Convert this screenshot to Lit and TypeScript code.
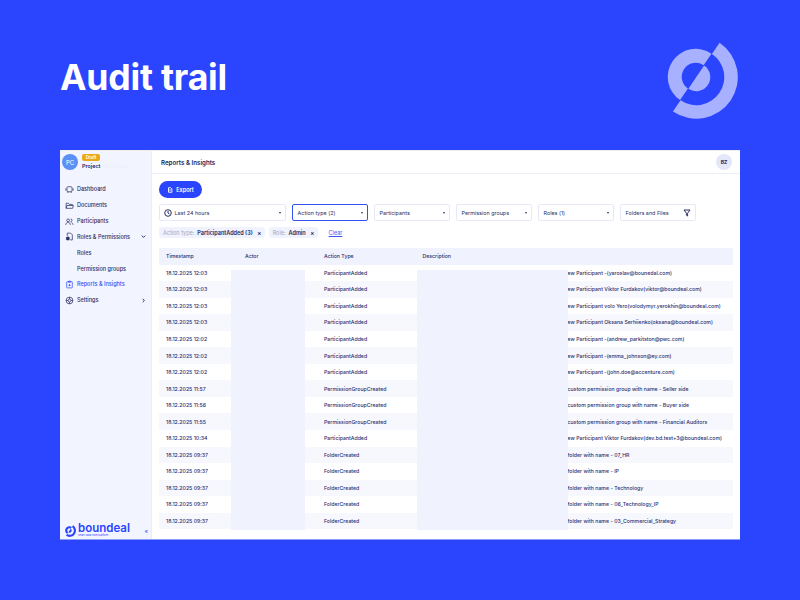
import { LitElement, html, css, svg } from "lit";
import { customElement } from "lit/decorators.js";

const rows = [
  ["18.12.2025 12:03", "ParticipantAdded", "ew Participant -(yaroslav@bounedal.com)"],
  ["18.12.2025 12:03", "ParticipantAdded", "ew Participant Viktor Furdakov(viktor@boundeal.com)"],
  ["18.12.2025 12:03", "ParticipantAdded", "ew Participant volo Yero(volodymyr.yerokhin@boundeal.com)"],
  ["18.12.2025 12:03", "ParticipantAdded", "ew Participant Oksana Serhiienko(oksana@boundeal.com)"],
  ["18.12.2025 12:02", "ParticipantAdded", "ew Participant -(andrew_parkitston@pwc.com)"],
  ["18.12.2025 12:02", "ParticipantAdded", "ew Participant -(emma_johnson@ey.com)"],
  ["18.12.2025 12:02", "ParticipantAdded", "ew Participant -(john.doe@accenture.com)"],
  ["18.12.2025 11:57", "PermissionGroupCreated", "custom permission group with name - Seller side"],
  ["18.12.2025 11:56", "PermissionGroupCreated", "custom permission group with name - Buyer side"],
  ["18.12.2025 11:55", "PermissionGroupCreated", "custom permission group with name - Financial Auditors"],
  ["18.12.2025 10:34", "ParticipantAdded", "ew Participant Viktor Furdakov(dev.bd.test+3@boundeal.com)"],
  ["18.12.2025 09:37", "FolderCreated", "folder with name - 07_HR"],
  ["18.12.2025 09:37", "FolderCreated", "folder with name - IP"],
  ["18.12.2025 09:37", "FolderCreated", "folder with name - Technology"],
  ["18.12.2025 09:37", "FolderCreated", "folder with name - 06_Technology_IP"],
  ["18.12.2025 09:37", "FolderCreated", "folder with name - 03_Commercial_Strategy"],
];

// the mark: ring on one side of the slash, half disc and outer band on the other
const mark = svg`
  <path transform="translate(-.25 -.17)" d="M15.7 -23.2A28 28 0 0 0 -15.7 23.2L-7.85 11.6A14 14 0 0 1 7.85 -11.6Z"></path>
  <path transform="translate(.25 .17)" d="M23.3 -34.4A41.5 41.5 0 0 1 -23.3 34.4L-15.7 23.2A28 28 0 0 0 15.7 -23.2Z"></path>
  <path transform="translate(.25 .17)" d="M7.85 -11.6A14 14 0 0 1 -7.85 11.6Z"></path>
`;

const icons: Record<string, unknown> = {
  dashboard: svg`<rect x="3.5" y="3" width="9" height="9" rx="2"/><path d="M1.5 6v4M14.5 6v4M5 12v2M11 12v2"/>`,
  documents: svg`<path d="M2 13V4h4l1.5 2H13v2"/><path d="M2 13l1.5-5H15l-1.500 5z"/>`,
  participants: svg`<circle cx="5.5" cy="6" r="2.5"/><path d="M1.500 14c0-3 2-4.500 4-4.500s4 1.500 4 4.500M10 3.500a2.500 2.500 0 0 1 0 5M11.500 10c1.500.6 3 2 3 4"/>`,
  roles: svg`<path d="M4 7V2h6l3 3v9H9"/><rect x="2.5" y="9" width="5" height="5" rx="1" fill="currentColor"/>`,
  reports: svg`<rect x="3" y="3" width="10" height="11" rx="1"/><path d="M6 2h4v2H6zM8 7v4M6 9.500h4"/>`,
  settings: svg`<circle cx="8" cy="8" r="6"/><circle cx="8" cy="8" r="2.500"/><path d="M8 2v3.500M8 10.500V14M2 8h3.500M10.500 8H14"/>`,
};

const navIcon = (name: string) =>
  html`<svg class="nav-icon" viewBox="0 0 16 16">${icons[name]}</svg>`;

@customElement("app-root")
export class AppRoot extends LitElement {
  static styles = css`
    :host {
      display: block;
      width: 800px;
      height: 600px;
      overflow: hidden;
      background: #2b45ff;
      font-family: Inter, "Liberation Sans", sans-serif;
      color: #1b1f5e;
    }
    .hero {
      height: 150px;
      padding: 0 60px;
      box-sizing: border-box;
      display: flex;
      justify-content: space-between;
      align-items: flex-start;
    }
    h1 {
      margin: 55px 0 0;
      font-size: 35.6px;
      line-height: 46px;
      font-weight: 700;
      color: #fff;
      letter-spacing: -0.2px;
    }
    .mark {
      width: 84px;
      height: 84px;
      margin: 35px 2px 0 0;
      fill: #a8b1ff;
    }
    .window {
      margin: 0 60px;
      height: 390px;
      box-sizing: border-box;
      background: #fff;
      border-top: 1px solid #efeee8;
      border-bottom: 1px solid #8f9cff;
      display: flex;
      overflow: hidden;
    }
    .side {
      width: 92px;
      flex: none;
      background: #f2f4ff;
      border-right: 1px solid #eaecf6;
      box-sizing: border-box;
      display: flex;
      flex-direction: column;
      padding: 2px 0 2px 2px;
    }
    .project {
      display: flex;
      gap: 4px;
      align-items: center;
      height: 18px;
    }
    .pc {
      width: 16px;
      height: 16px;
      border-radius: 50%;
      background: #5c90f5;
      color: #fff;
      font-size: 6px;
      display: grid;
      place-items: center;
    }
    .draft {
      display: block;
      width: 18px;
      height: 7px;
      border-radius: 2px;
      background: #e9a91d;
      color: #fff;
      font-size: 4.5px;
      line-height: 7px;
      text-align: center;
      font-weight: 600;
    }
    .pname {
      font-size: 5.4px;
      font-weight: 600;
      line-height: 8px;
      margin-top: 1px;
    }
    .pname span {
      color: #eef0fb;
    }
    nav {
      margin-top: 10.4px;
      display: flex;
      flex-direction: column;
    }
    .nav {
      height: 15.85px;
      display: flex;
      align-items: center;
      gap: 3px;
      padding-left: 3px;
      font-size: 5.5px;
      font-weight: 500;
      color: #2a2f66;
    }
    .nav.sub {
      padding-left: 15px;
    }
    .nav.active {
      color: #3450f5;
    }
    .nav-icon {
      width: 9px;
      height: 9px;
      flex: none;
      fill: none;
      stroke: currentColor;
      stroke-width: 1.3;
    }
    .chev {
      margin-left: auto;
      margin-right: 5px;
      width: 5px;
      height: 5px;
      fill: none;
      stroke: currentColor;
      stroke-width: 1.2;
    }
    .brand {
      margin-top: auto;
      display: flex;
      align-items: center;
      gap: 2.5px;
      padding-left: 0.5px;
      color: #2b45ff;
    }
    .brand svg {
      width: 13px;
      height: 13px;
      fill: #2b45ff;
    }
    .brand b {
      font-size: 11.5px;
      line-height: 11px;
      font-weight: 600;
      display: block;
    }
    .brand small {
      display: block;
      font-size: 2.5px;
      line-height: 3px;
    }
    .collapse {
      margin-left: auto;
      margin-right: 3px;
      font-size: 6px;
    }
    .main {
      flex: 1;
      min-width: 0;
      display: flex;
      flex-direction: column;
    }
    header {
      height: 23px;
      flex: none;
      border-bottom: 1px solid #eceef8;
      display: flex;
      align-items: center;
      justify-content: space-between;
      padding: 0 8px 0 9px;
      box-sizing: border-box;
      font-size: 6.2px;
      font-weight: 600;
    }
    .bz {
      width: 16px;
      height: 16px;
      border-radius: 50%;
      background: #e4e7f8;
      font-size: 5px;
      font-weight: 700;
      display: grid;
      place-items: center;
    }
    .content {
      position: relative;
      padding: 7px 7px 0;
      flex: 1;
    }
    .export {
      width: 43px;
      height: 17px;
      border-radius: 9px;
      background: #2b45ff;
      color: #fff;
      display: flex;
      align-items: center;
      justify-content: center;
      gap: 3px;
      font-size: 5.5px;
      font-weight: 600;
    }
    .export svg {
      width: 6px;
      height: 6px;
      fill: none;
      stroke: #fff;
      stroke-width: 1.2;
    }
    .filters {
      display: flex;
      gap: 6.4px;
      margin-top: 6px;
    }
    .select {
      width: 75.6px;
      height: 17px;
      box-sizing: border-box;
      border: 1px solid #e6e9f7;
      border-radius: 2px;
      display: flex;
      align-items: center;
      padding: 0 4px 0 4.5px;
      gap: 2.5px;
      font-size: 5.4px;
      color: #2a2f66;
    }
    .select.first {
      width: 126.7px;
      padding-left: 4px;
    }
    .select.on {
      border-color: #3450f5;
    }
    .select i {
      margin-left: auto;
      width: 0;
      height: 0;
      border: 1.8px solid transparent;
      border-top: 2px solid #2a2f66;
      border-bottom: 0;
    }
    .select svg {
      width: 8px;
      height: 8px;
      fill: none;
      stroke: currentColor;
      stroke-width: 1;
      flex: none;
    }
    .select svg:last-child {
      margin-left: auto;
    }
    .chips {
      display: flex;
      align-items: center;
      gap: 3.4px;
      margin-top: 6px;
      height: 11px;
      font-size: 5.5px;
    }
    .chip {
      height: 11px;
      border-radius: 3px;
      background: #f0f2fd;
      display: flex;
      align-items: center;
      gap: 3px;
      padding: 0 4px;
      font-weight: 600;
    }
    .chip em {
      font-style: normal;
      font-weight: 400;
      color: #a3a7c4;
    }
    .chip span {
      margin-left: 1.5px;
      font-size: 6px;
    }
    .clear {
      margin-left: 7px;
      color: #3f57f2;
      text-decoration: underline;
    }
    .table {
      margin-top: 10px;
      font-size: 5.2px;
      font-weight: 500;
      color: #2a2f6e;
    }
    .row {
      display: grid;
      grid-template-columns: 79px 79px 98.5px 145px 1fr;
      height: 16.55px;
      align-items: center;
      padding-left: 7px;
      white-space: nowrap;
    }
    .row:nth-child(odd) {
      background: #f7f8fe;
    }
    .row.head {
      background: #f0f2fd;
    }
    .row span:last-child {
      overflow: hidden;
    }
    .mask {
      position: absolute;
      top: 96px;
      height: 259.5px;
      background: #f0f2fd;
    }
    .mask.actor {
      left: 79px;
      width: 74px;
    }
    .mask.desc {
      left: 265px;
      width: 151px;
    }
  `;

  render() {
    return html`
      <div class="hero">
        <h1>Audit trail</h1>
        <svg class="mark" viewBox="-42 -42 84 84">${mark}</svg>
      </div>
      <div class="window">
        <aside class="side">
          <div class="project">
            <div class="pc">PC</div>
            <div>
              <span class="draft">Draft</span>
              <div class="pname">Project <span>Christmas</span></div>
            </div>
          </div>
          <nav>
            <div class="nav">${navIcon("dashboard")}Dashboard</div>
            <div class="nav">${navIcon("documents")}Documents</div>
            <div class="nav">${navIcon("participants")}Participants</div>
            <div class="nav">
              ${navIcon("roles")}Roles &amp; Permissions
              <svg class="chev" viewBox="0 0 6 6"><path d="M1 2l2 2 2-2" /></svg>
            </div>
            <div class="nav sub">Roles</div>
            <div class="nav sub">Permission groups</div>
            <div class="nav active">${navIcon("reports")}Reports &amp; Insights</div>
            <div class="nav">
              ${navIcon("settings")}Settings
              <svg class="chev" viewBox="0 0 6 6"><path d="M2 1l2 2-2 2" /></svg>
            </div>
          </nav>
          <div class="brand">
            <svg viewBox="-42 -42 84 84">${mark}</svg>
            <div><b>boundeal</b><small>Smart data room platform</small></div>
            <span class="collapse">«</span>
          </div>
        </aside>
        <div class="main">
          <header>Reports &amp; Insights<div class="bz">BZ</div></header>
          <div class="content">
            <div class="export">
              <svg viewBox="0 0 8 8"><path d="M2 1h3l1.500 1.500V7H2zM4 3v2.500" /></svg>Export
            </div>
            <div class="filters">
              <div class="select first">
                <svg viewBox="0 0 8 8"><circle cx="4" cy="4" r="3.300" /><path d="M4 2v2l1.500 1" /></svg>
                Last 24 hours<i></i>
              </div>
              <div class="select on">Action type (2)<i></i></div>
              <div class="select">Participants<i></i></div>
              <div class="select">Permission groups<i></i></div>
              <div class="select">Roles (1)<i></i></div>
              <div class="select">
                Folders and Files
                <svg viewBox="0 0 8 8"><path d="M1 1h6L4.600 4.200V7L3.400 6.200V4.200z" /></svg>
              </div>
            </div>
            <div class="chips">
              <div class="chip"><em>Action type:</em> ParticipantAdded (3) <span>×</span></div>
              <div class="chip"><em>Role:</em> Admin <span>×</span></div>
              <span class="clear">Clear</span>
            </div>
            <div class="table">
              <div class="row head">
                <span>Timestamp</span><span>Actor</span><span>Action Type</span><span>Description</span><span></span>
              </div>
              ${rows.map(
                ([time, type, desc]) => html`
                  <div class="row"><span>${time}</span><span></span><span>${type}</span><span></span><span>${desc}</span></div>
                `,
              )}
            </div>
            <div class="mask actor"></div>
            <div class="mask desc"></div>
          </div>
        </div>
      </div>
    `;
  }
}
